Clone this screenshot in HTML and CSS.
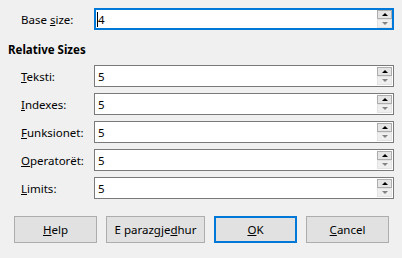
FILE: index.html
```html
<!DOCTYPE html>
<html lang="en">
<head>
  <meta charset="UTF-8" />
  <title>Font Sizes</title>
  <link rel="stylesheet" href="styles.css">
</head>
<body>

<div class="dialog">
  <div class="field base">
    <label class="lbl">Base <u>s</u>ize:</label>
    <div class="spin focus">
      <span class="caret"></span><span class="val">4</span>
      <div class="arrows"><span class="up"></span><span class="down"></span></div>
    </div>
  </div>

  <h3 class="section">Relative Sizes</h3>

  <div class="fields">
    <div class="field">
      <label class="lbl"><u>T</u>eksti:</label>
      <div class="spin"><span class="val">5</span><div class="arrows"><span class="up"></span><span class="down"></span></div></div>
    </div>
    <div class="field">
      <label class="lbl"><u>I</u>ndexes:</label>
      <div class="spin"><span class="val">5</span><div class="arrows"><span class="up"></span><span class="down"></span></div></div>
    </div>
    <div class="field">
      <label class="lbl"><u>F</u>unksionet:</label>
      <div class="spin"><span class="val">5</span><div class="arrows"><span class="up"></span><span class="down"></span></div></div>
    </div>
    <div class="field">
      <label class="lbl"><u>O</u>peratorët:</label>
      <div class="spin"><span class="val">5</span><div class="arrows"><span class="up"></span><span class="down"></span></div></div>
    </div>
    <div class="field">
      <label class="lbl"><u>L</u>imits:</label>
      <div class="spin"><span class="val">5</span><div class="arrows"><span class="up"></span><span class="down"></span></div></div>
    </div>
  </div>

  <div class="buttons">
    <button class="btn"><u>H</u>elp</button>
    <button class="btn wide">E parazgje<u>d</u>hur</button>
    <button class="btn default"><u>O</u>K</button>
    <button class="btn"><u>C</u>ancel</button>
  </div>
</div>

</body>
</html>
```

FILE: styles.css
```css
body {
  margin: 0;
  background: #f0f0f0;
  font-family: "Noto Sans", "Open Sans", sans-serif;
  font-size: 11.5px;
  color: #000;
}
.dialog {
  width: 402px;
  height: 258px;
  padding: 8px 0 0 8px;
  box-sizing: border-box;
}
.field {
  display: grid;
  grid-template-columns: 86px 300px;
  align-items: center;
  height: 22px;
}
.lbl {
  padding-left: 13px;
}
.section {
  margin: 12px 0 7px 0;
  font-size: 11.5px;
  line-height: 16px;
  font-weight: bold;
}
.fields {
  display: flex;
  flex-direction: column;
  gap: 6px;
}
.spin {
  position: relative;
  height: 22px;
  box-sizing: border-box;
  border: 1px solid #7a7a7a;
  background: #fff;
  display: flex;
  align-items: center;
  padding-left: 3px;
}
.spin.focus {
  border: 2px solid #0078d7;
  padding-left: 1px;
}
.caret {
  width: 1px;
  height: 15px;
  background: #000;
  margin-right: 0;
}
.arrows {
  position: absolute;
  right: 1px;
  top: 1px;
  width: 15px;
  height: 18px;
  display: flex;
  flex-direction: column;
}
.focus .arrows {
  right: 0;
  top: 0;
}
.arrows span {
  flex: 1;
  box-sizing: border-box;
  display: flex;
  align-items: center;
  justify-content: center;
}
.arrows .up {
  background: #e5e5e5;
  border: 1px solid #adadad;
}
.arrows .down {
  background: #efefef;
  border: 1px solid #e3e3e3;
}
.arrows .up::after {
  content: "";
  border-left: 3px solid transparent;
  border-right: 3px solid transparent;
  border-bottom: 3px solid #000;
}
.arrows .down::after {
  content: "";
  border-left: 3px solid transparent;
  border-right: 3px solid transparent;
  border-top: 3px solid #838383;
}
.buttons {
  display: flex;
  gap: 9px;
  margin: 17px 0 0 6px;
}
.btn {
  width: 83px;
  height: 27px;
  background: #e1e1e1;
  border: 1px solid #adadad;
  font-family: inherit;
  font-size: 11.5px;
  color: #000;
  padding: 0;
}
.btn.wide {
  width: 99px;
}
.btn.default {
  border: 2px solid #0078d7;
}
```
